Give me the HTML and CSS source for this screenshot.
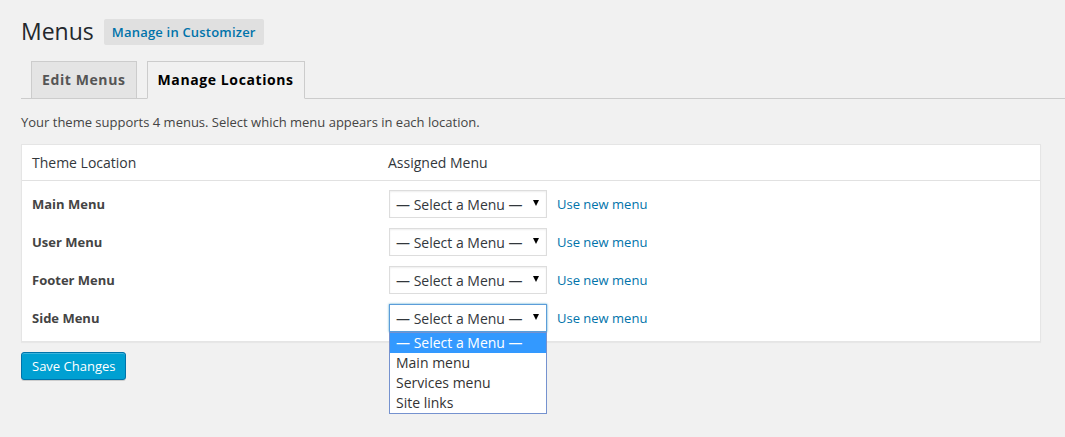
FILE: index.html
```html
<!DOCTYPE html>
<html lang="en">
<head>
<meta charset="utf-8">
<title>Menus</title>
<link rel="stylesheet" href="styles.css">
</head>
<body>
<div class="wrap">
  <h1 class="title">Menus <a class="title-action" href="#">Manage in Customizer</a></h1>
  <div class="tabs">
    <a class="tab" href="#">Edit Menus</a>
    <a class="tab active" href="#">Manage Locations</a>
  </div>
  <p class="desc">Your theme supports 4 menus. Select which menu appears in each location.</p>
  <table class="locations">
    <thead>
      <tr>
        <th class="col-loc">Theme Location</th>
        <th class="col-menu">Assigned Menu</th>
      </tr>
    </thead>
    <tbody>
      <tr class="first">
        <td><div class="cell label">Main Menu</div></td>
        <td><div class="cell"><div class="select"><span class="sel-text">— Select a Menu —</span><span class="arrow"></span></div><a class="newlink" href="#">Use new menu</a></div></td>
      </tr>
      <tr>
        <td><div class="cell label">User Menu</div></td>
        <td><div class="cell"><div class="select"><span class="sel-text">— Select a Menu —</span><span class="arrow"></span></div><a class="newlink" href="#">Use new menu</a></div></td>
      </tr>
      <tr>
        <td><div class="cell label">Footer Menu</div></td>
        <td><div class="cell"><div class="select"><span class="sel-text">— Select a Menu —</span><span class="arrow"></span></div><a class="newlink" href="#">Use new menu</a></div></td>
      </tr>
      <tr class="last">
        <td><div class="cell label">Side Menu</div></td>
        <td><div class="cell"><div class="select focused"><span class="sel-text">— Select a Menu —</span><span class="arrow"></span>
          <ul class="dropdown">
            <li class="selected">— Select a Menu —</li>
            <li>Main menu</li>
            <li>Services menu</li>
            <li>Site links</li>
          </ul>
        </div><a class="newlink" href="#">Use new menu</a></div></td>
      </tr>
    </tbody>
  </table>
  <button class="save" type="button">Save Changes</button>
</div>
</body>
</html>
```

FILE: styles.css
```css
html, body {
  margin: 0;
  padding: 0;
}
body {
  min-height: 437px;
  background: #f1f1f1;
  font-family: "Open Sans", "Noto Sans", sans-serif;
  font-size: 13px;
  color: #444;
}
.wrap {
  padding-left: 21px;
  min-height: 437px;
}
.title {
  margin: 0;
  padding-top: 17px;
  height: 29px;
  display: flex;
  align-items: center;
  font-size: 23px;
  font-weight: 400;
  line-height: 29px;
  color: #23282d;
}
.title-action {
  margin-left: 10px;
  padding: 4px 8px;
  line-height: 18px;
  font-size: 13px;
  font-weight: 600;
  letter-spacing: 0.2px;
  background: #e0e0e0;
  color: #0073aa;
  border-radius: 2px;
  text-decoration: none;
}
.tabs {
  margin-top: 15px;
  display: flex;
  align-items: flex-start;
  padding-left: 10px;
  border-bottom: 1px solid #ccc;
}
.tab {
  display: block;
  margin-right: 10px;
  padding: 6px 10px;
  line-height: 24px;
  font-size: 14px;
  font-weight: 700;
  letter-spacing: 0.6px;
  color: #555;
  background: #e4e4e4;
  border: 1px solid #ccc;
  border-bottom: none;
  text-decoration: none;
}
.tab.active {
  color: #000;
  background: #f1f1f1;
  border-bottom: 1px solid #f1f1f1;
  margin-bottom: -1px;
}
.desc {
  margin: 13px 0 12px;
  line-height: 20px;
  font-size: 13px;
  color: #444;
}
.locations {
  width: 1020px;
  border: 1px solid #e5e5e5;
  border-collapse: separate;
  border-spacing: 0;
  background: #fff;
  box-shadow: 0 1px 1px rgba(0, 0, 0, 0.04);
}
.locations th {
  height: 35px;
  padding: 0 10px;
  text-align: left;
  font-weight: 400;
  font-size: 14px;
  color: #32373c;
  border-bottom: 1px solid #e1e1e1;
  vertical-align: middle;
}
.col-loc {
  width: 336px;
}
.locations td {
  padding: 0 10px;
  vertical-align: middle;
}
.locations tr.first td {
  padding-top: 4px;
}
.locations tr.last td {
  padding-bottom: 4px;
}
.cell {
  height: 38px;
  display: flex;
  align-items: center;
}
.label {
  font-weight: 700;
  font-size: 13px;
  color: #444;
}
.select {
  position: relative;
  box-sizing: border-box;
  width: 158px;
  height: 28px;
  margin-left: 1px;
  border: 1px solid #ddd;
  background: #fff;
  box-shadow: inset 0 1px 2px rgba(0, 0, 0, 0.07);
  padding-left: 6px;
  display: flex;
  align-items: center;
  font-size: 14px;
  color: #32373c;
}
.select.focused {
  border-color: #5b9dd9;
  box-shadow: 0 0 2px rgba(30, 140, 190, 0.8);
}
.sel-text {
  flex: 1;
  white-space: nowrap;
}
.arrow {
  width: 0;
  height: 0;
  margin-right: 7px;
  margin-top: -3px;
  border-left: 3px solid transparent;
  border-right: 3px solid transparent;
  border-top: 6px solid #000;
}
.newlink {
  margin-left: 10px;
  color: #0073aa;
  text-decoration: none;
  font-size: 13px;
}
.dropdown {
  position: absolute;
  top: calc(100% + 1px);
  left: -1px;
  width: 158px;
  box-sizing: border-box;
  margin: 0;
  padding: 0;
  list-style: none;
  background: #fff;
  border: 1px solid #7592cf;
  z-index: 5;
}
.dropdown li {
  height: 20px;
  line-height: 20px;
  padding-left: 6px;
  font-size: 14px;
  color: #333;
  white-space: nowrap;
}
.dropdown li.selected {
  background: #3399ff;
  color: #fff;
}
.save {
  display: block;
  margin-top: 10px;
  height: 28px;
  padding: 0 10px;
  line-height: 26px;
  font-family: "Open Sans", "Noto Sans", sans-serif;
  font-size: 13px;
  color: #fff;
  background: #00a0d2;
  border: 1px solid #0073aa;
  border-radius: 3px;
  box-shadow: inset 0 1px 0 rgba(120, 200, 230, 0.5), 0 1px 0 rgba(0, 0, 0, 0.15);
  cursor: pointer;
}
```
